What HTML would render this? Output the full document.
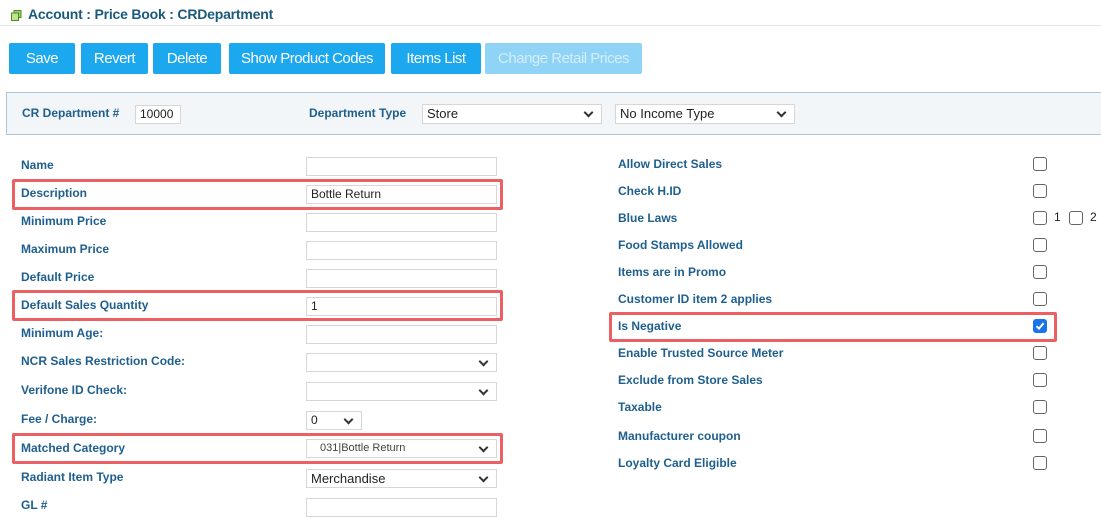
<!DOCTYPE html>
<html><head><meta charset="utf-8"><style>
*{box-sizing:border-box;margin:0;padding:0}
body{width:1101px;height:523px;background:#fff;position:relative;overflow:hidden;font-family:"Liberation Sans",Arial,sans-serif}
.a{position:absolute}
.hdr{left:28px;top:6px;font-size:14px;font-weight:bold;color:#1a5a7c;letter-spacing:-0.2px}
.btn{position:absolute;top:43px;height:31px;background:#1ca8ee;color:#fff;font-size:15px;line-height:32px;text-align:center;border-radius:2px;letter-spacing:-0.5px}
.lbl{position:absolute;font-size:12px;font-weight:bold;color:#1e5f8e;line-height:14px}
.in{position:absolute;left:306px;width:191px;height:19px;border:1px solid #d6d6d6;background:#fff;font-size:12px;line-height:17px;padding-left:4px;color:#222}
.sel::after{content:"";position:absolute;right:9px;top:4px;width:5px;height:5px;border-right:2px solid #333;border-bottom:2px solid #333;transform:rotate(45deg)}
.red{position:absolute;border:3px solid #ec5f62;border-radius:2px}
.cb{position:absolute;left:1033px;width:14px;height:14px;border:1px solid #666;border-radius:3px;background:#fff}
</style></head><body>
<svg class="a" style="left:11px;top:10px" width="11" height="11" viewBox="0 0 11 11"><rect x="3" y="0.5" width="7" height="7" fill="#9ccf6a" stroke="#4c8a2a"/><rect x="0.5" y="3" width="7" height="7.5" fill="#bfe28f" stroke="#4c8a2a"/></svg>
<div class="a hdr">Account : Price Book : CRDepartment</div>
<div class="a" style="left:0;top:25px;width:1101px;height:1px;background:#e4e8ea"></div>
<div class="btn" style="left:9px;width:66px">Save</div>
<div class="btn" style="left:81px;width:67px">Revert</div>
<div class="btn" style="left:153px;width:68px">Delete</div>
<div class="btn" style="left:229px;width:156px">Show Product Codes</div>
<div class="btn" style="left:391px;width:90px">Items List</div>
<div class="btn" style="left:485px;width:157px;background:#8fd3f7;color:#d6eefb">Change Retail Prices</div>
<div class="a" style="left:6px;top:92px;width:1095px;height:43px;background:#f3f6f8;border:1px solid #a9c8d8;border-right:none"></div>
<div class="lbl" style="left:22px;top:106px">CR Department #</div>
<div class="in" style="left:135px;top:105px;width:46px">10000</div>
<div class="lbl" style="left:309px;top:106px">Department Type</div>
<div class="in sel" style="left:422px;top:104px;width:180px;height:20px;font-size:13px">Store</div>
<div class="in sel" style="left:615px;top:104px;width:180px;height:20px;font-size:13px">No Income Type</div>

<div class="red" style="left:12px;top:179px;width:491px;height:31px"></div>
<div class="red" style="left:12px;top:290px;width:491px;height:31px"></div>
<div class="red" style="left:12px;top:433px;width:491px;height:31px"></div>
<div class="red" style="left:609px;top:312px;width:448px;height:30px"></div>

<div class="lbl" style="left:21px;top:158px">Name</div><div class="in" style="top:157px"></div>
<div class="lbl" style="left:21px;top:186px">Description</div><div class="in" style="top:185px">Bottle Return</div>
<div class="lbl" style="left:21px;top:214px">Minimum Price</div><div class="in" style="top:213px"></div>
<div class="lbl" style="left:21px;top:242px">Maximum Price</div><div class="in" style="top:241px"></div>
<div class="lbl" style="left:21px;top:270px">Default Price</div><div class="in" style="top:269px"></div>
<div class="lbl" style="left:21px;top:298px">Default Sales Quantity</div><div class="in" style="top:297px">1</div>
<div class="lbl" style="left:21px;top:326px">Minimum Age:</div><div class="in" style="top:325px"></div>
<div class="lbl" style="left:21px;top:354px">NCR Sales Restriction Code:</div><div class="in sel" style="top:353px"></div>
<div class="lbl" style="left:21px;top:383px">Verifone ID Check:</div><div class="in sel" style="top:382px"></div>
<div class="lbl" style="left:21px;top:412px">Fee / Charge:</div><div class="in sel" style="top:411px;width:56px">0</div>
<div class="lbl" style="left:21px;top:441px">Matched Category</div><div class="in sel" style="top:439px;font-size:11px;padding-left:13px;color:#444">031|Bottle Return</div>
<div class="lbl" style="left:21px;top:470px">Radiant Item Type</div><div class="in sel" style="top:469px;font-size:13px">Merchandise</div>
<div class="lbl" style="left:21px;top:498px">GL #</div><div class="in" style="top:498px"></div>

<div class="lbl" style="left:618px;top:157px">Allow Direct Sales</div><div class="cb" style="top:157px"></div>
<div class="lbl" style="left:618px;top:184px">Check H.ID</div><div class="cb" style="top:184px"></div>
<div class="lbl" style="left:618px;top:211px">Blue Laws</div><div class="cb" style="top:211px"></div>
<div class="a" style="left:1054px;top:210px;font-size:12px;color:#222">1</div>
<div class="cb" style="left:1069px;top:211px"></div>
<div class="a" style="left:1090px;top:210px;font-size:12px;color:#222">2</div>
<div class="lbl" style="left:618px;top:238px">Food Stamps Allowed</div><div class="cb" style="top:238px"></div>
<div class="lbl" style="left:618px;top:265px">Items are in Promo</div><div class="cb" style="top:265px"></div>
<div class="lbl" style="left:618px;top:292px">Customer ID item 2 applies</div><div class="cb" style="top:292px"></div>
<div class="lbl" style="left:618px;top:319px">Is Negative</div>
<div class="cb" style="top:319px;background:#1a73e8;border-color:#1a73e8"><svg width="12" height="12" viewBox="0 0 12 12" style="display:block"><path d="M2.5 6.2 L5 8.6 L9.6 3.2" fill="none" stroke="#fff" stroke-width="2"/></svg></div>
<div class="lbl" style="left:618px;top:346px">Enable Trusted Source Meter</div><div class="cb" style="top:346px"></div>
<div class="lbl" style="left:618px;top:373px">Exclude from Store Sales</div><div class="cb" style="top:373px"></div>
<div class="lbl" style="left:618px;top:400px">Taxable</div><div class="cb" style="top:400px"></div>
<div class="lbl" style="left:618px;top:429px">Manufacturer coupon</div><div class="cb" style="top:429px"></div>
<div class="lbl" style="left:618px;top:456px">Loyalty Card Eligible</div><div class="cb" style="top:456px"></div>
</body></html>
